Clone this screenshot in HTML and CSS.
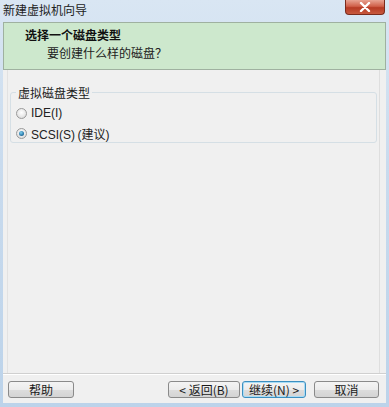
FILE: index.html
```html
<!DOCTYPE html>
<html lang="zh-CN">
<head>
<meta charset="utf-8">
<title>新建虚拟机向导</title>
<link rel="stylesheet" href="styles.css">
</head>
<body>
<div class="window">
  <div class="titlebar">
    <span class="title">新建虚拟机向导</span>
    <span class="close"><svg width="12" height="10" viewBox="0 0 12 10"><path d="M2 1 L10 9 M10 1 L2 9" stroke="#fff" stroke-width="2.4" stroke-linecap="round"/></svg></span>
  </div>
  <div class="client">
    <div class="header">
      <div class="h-title">选择一个磁盘类型</div>
      <div class="h-sub">要创建什么样的磁盘？</div>
    </div>
    <div class="page">
      <fieldset class="group">
        <legend>虚拟磁盘类型</legend>
        <label class="radio"><span class="dot"></span>IDE(I)</label>
        <label class="radio"><span class="dot on"></span>SCSI(S)&thinsp;(建议)</label>
      </fieldset>
      <div class="spacer"></div>
    </div>
    <div class="footer">
      <button class="btn help">帮助</button>
      <div class="right">
        <button class="btn back">&lt; 返回(B)</button>
        <button class="btn next">继续(N) &gt;</button>
        <button class="btn cancel">取消</button>
      </div>
    </div>
  </div>
</div>
</body>
</html>
```
FILE: styles.css
```css
* { box-sizing: border-box; }
html, body { margin: 0; padding: 0; }
body {
  width: 389px; height: 407px; overflow: hidden;
  font-family: "Liberation Sans", "Noto Sans CJK SC", sans-serif;
  font-size: 12px; color: #1a1a1a;
  background: #f0f0f0;
}
.window {
  width: 389px; height: 407px;
  display: flex; flex-direction: column;
  background: linear-gradient(180deg, #d9e6f3 0%, #c9dbee 40%, #bcd3ea 100%);
}
.titlebar {
  height: 22px; display: flex; align-items: flex-start; justify-content: space-between;
  padding: 0 4px 0 3px;
}
.title {
  margin-top: 3px; font-size: 12px; color: #222; line-height: 14px;
  font-family: "Noto Sans CJK SC", sans-serif;
}
.close {
  width: 40px; height: 15px; margin-top: 0;
  display: flex; align-items: center; justify-content: center;
  background: linear-gradient(180deg, #e8a392 0%, #d0604a 45%, #b63a24 55%, #c85a3e 100%);
  border: 1px solid #7a2b1c; border-top: none;
  border-radius: 0 0 4px 4px;
}
.client {
  flex: 1; margin: 0 3px 4px 3px;
  display: flex; flex-direction: column;
  background: #f0f0f0;
}
.header {
  height: 48px; background: #cde8cd;
  border: 1px solid #9fb1a0;
  padding: 3px 0 0 21px;
  font-family: "Noto Sans CJK SC", sans-serif;
}
.h-title { font-weight: bold; font-size: 12px; line-height: 18px; color: #111; }
.h-sub { font-size: 12px; line-height: 18px; margin-left: 22px; color: #222; }
.page {
  flex: 1; display: flex; flex-direction: column;
  margin: 0 6px 0 4px;
  border-left: 1px solid #e2e2e2; border-right: 1px solid #dedede;
  padding: 14px 2px 0 2px;
}
.group {
  margin: 0; padding: 8px 0 6px 5px;
  border: 1px solid #d5dfe5; border-radius: 3px;
  height: 59px;
}
.group legend {
  padding: 0 2px; margin-left: 0; font-size: 12px;
  font-family: "Noto Sans CJK SC", sans-serif; color: #1a1a1a;
}
.radio {
  display: flex; align-items: center; gap: 4px; height: 20px;
  font-family: "Liberation Sans", "Noto Sans CJK SC", sans-serif; font-size: 12px; color: #222;
}
.radio:first-of-type { margin-top: -6px; }
.dot {
  width: 11px; height: 11px; border-radius: 50%;
  border: 1px solid #9a9a9a;
  background: radial-gradient(circle at 50% 40%, #ffffff 0%, #e6e6e6 60%, #cfcfcf 100%);
  position: relative;
}
.dot.on::after {
  content: ""; position: absolute; left: 2px; top: 2px; width: 5px; height: 5px; border-radius: 50%;
  background: radial-gradient(circle at 40% 35%, #7fd0f0 0%, #2a78a8 60%, #154a6e 100%);
}
.spacer { flex: 1; }
.footer {
  height: 30px; border-top: 1px solid #d0d0d0;
  box-shadow: inset 0 1px 0 #ffffff;
  display: flex; align-items: flex-start; justify-content: space-between;
  padding: 7px 7px 0 5px;
}
.right { display: flex; gap: 2px; }
.btn {
  height: 17px; padding: 0; margin: 0;
  font-family: "Noto Sans CJK SC", sans-serif; font-size: 12px; line-height: 15px; color: #1a1a1a;
  border: 1px solid #8a8a8a; border-radius: 3px;
  background: linear-gradient(180deg, #f4f4f4 0%, #ececec 50%, #dddddd 51%, #d4d4d4 100%);
}
.help { width: 66px; }
.back { width: 72px; }
.next { width: 64px; border-color: #3c8fc0; box-shadow: inset 0 0 0 1px #a9dcf5; }
.cancel { width: 65px; margin-left: 6px; }
```
